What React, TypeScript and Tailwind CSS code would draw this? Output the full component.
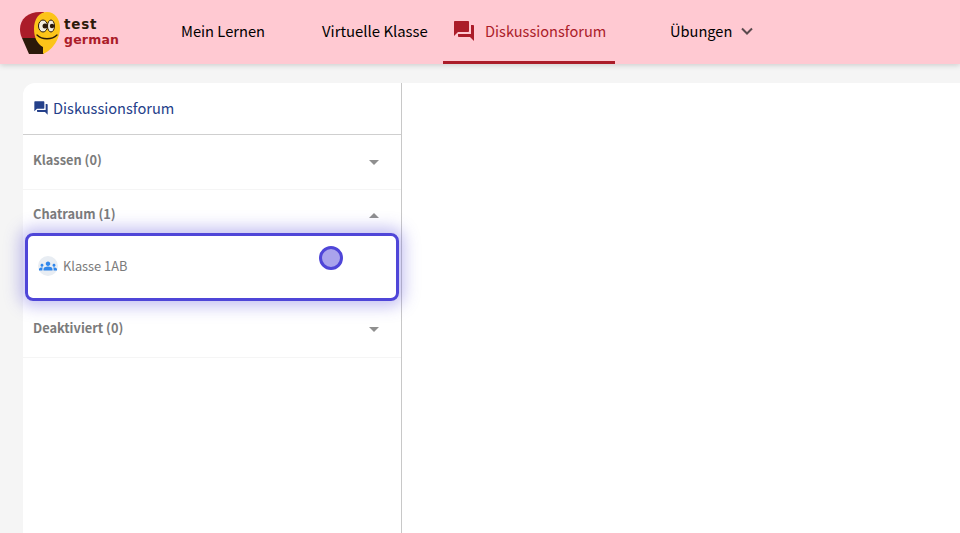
import React from "react";

const F = "font-['Noto_Sans_CJK_SC','Noto_Sans',sans-serif]";

function Chat({ className }: { className: string }) {
  return (
    <svg viewBox="0 0 24 24" className={className} fill="currentColor">
      <path d="M21 6h-2v9H6v2c0 .55.45 1 1 1h11l4 4V7c0-.55-.45-1-1-1zm-4 6V3c0-.55-.45-1-1-1H3c-.55 0-1 .45-1 1v14l4-4h10c.55 0 1-.45 1-1z" />
    </svg>
  );
}

function Logo() {
  return (
    <div className="flex items-center gap-[4px]">
      <svg width="40" height="44" viewBox="0 0 40 44">
        <g transform="translate(0 1)">
          <path d="M20 1C8 1 0 8 0 18c0 3 .5 6 2 9h22V1z" fill="#ab1c29" />
          <path d="M2 27h22v16H9z" fill="#2b1a0a" />
          <path d="M27 1C19 1 14 8 14 18c0 8 3 15 9 18v7c7-3 12-9 14.500-15C39 25 40 21 40 17 40 8 35 1 27 1z" fill="#fcc419" />
          <ellipse cx="23" cy="15" rx="4.500" ry="6" fill="#f5f0e0" stroke="#2b1a0a" strokeWidth="1" />
          <ellipse cx="31" cy="15" rx="3.500" ry="6" fill="#f5f0e0" stroke="#2b1a0a" strokeWidth="1" />
          <circle cx="25" cy="15" r="2.500" fill="#2b1a0a" />
          <circle cx="32" cy="15" r="2.200" fill="#2b1a0a" />
          <path d="M17 24c5 5 15 5 20 0" fill="none" stroke="#2b1a0a" strokeWidth="1.300" strokeLinecap="round" />
        </g>
      </svg>
      <div className="flex flex-col font-['DejaVu_Sans',sans-serif] font-bold text-[12.5px] leading-[15px] tracking-[0.2px]">
        <span className="text-[13.5px] tracking-[0.8px] text-[#2b1a0a]">test</span>
        <span className="text-[#ab1c29]">german</span>
      </div>
    </div>
  );
}

function Caret({ up }: { up?: boolean }) {
  return (
    <svg width="12" height="6" viewBox="0 0 12 6" className="text-[#8f8f8f]" fill="currentColor">
      <path d={up ? "M1 6l5-5 5 5z" : "M1 0l5 5 5-5z"} />
    </svg>
  );
}

function Section({ title, up, h, tm, cm }: { title: string; up?: boolean; h: string; tm: string; cm: string }) {
  return (
    <div className={`flex items-start justify-between pl-[10px] pr-[21px] border-b border-[#f5f5f5] ${h}`}>
      <span className={`text-[12.8px] leading-[18px] font-bold text-[#7b7b7b] ${tm}`}>{title}</span>
      <span className={`flex ${cm}`}><Caret up={up} /></span>
    </div>
  );
}

export default function App() {
  return (
    <div className={`${F} relative h-[533px] w-[960px] overflow-hidden bg-[#f5f5f5]`}>
      <header className="flex h-[64px] items-stretch bg-[#ffc9d2] shadow-[0_1px_6px_rgba(0,0,0,0.18)] pl-[20px]">
        <div className="flex items-center w-[161px]"><Logo /></div>
        <nav className="flex items-stretch text-[14.6px] leading-[20px] text-black">
          <a className="flex items-center w-[141px] pb-[2px] text-[14.7px]">Mein Lernen</a>
          <a className="flex items-center w-[121px] pb-[2px] text-[14.9px]">Virtuelle Klasse</a>
          <a className="flex items-center w-[172px] pl-[9px] gap-[9px] text-[#ab1c29] border-b-[3px] border-[#ab1c29]">
            <Chat className="h-[24px] w-[24px]" />
            Diskussionsforum
          </a>
          <a className="flex items-center ml-[55px] gap-[8px] pb-[2px]">
            Übungen
            <svg width="14" height="14" viewBox="0 0 14 14" fill="none" stroke="#5a4a4e" strokeWidth="2"><path d="M2 4.500l5 5 5-5" /></svg>
          </a>
        </nav>
      </header>

      <main className="flex pl-[23px] pt-[19px]">
        <aside className="h-[450px] w-[379px] shrink-0 rounded-tl-[12px] bg-white border-r border-[#c8c8c8]">
          <div className="flex h-[52px] items-center gap-[4px] border-b border-[#cfcfcf] pl-[10px] pb-[1px] text-[14.6px] leading-[20px] text-[#24408a]">
            <Chat className="h-[16px] w-[16px]" />
            Diskussionsforum
          </div>
          <Section title="Klassen (0)" h="h-[55px]" tm="mt-[16px]" cm="mt-[25px]" />
          <Section title="Chatraum (1)" up h="h-[54px] border-b-0" tm="mt-[15px]" cm="mt-[22px]" />
          <div className="flex h-[58px] items-start gap-[5px] pl-[15px] pt-[12px] text-[12.8px] leading-[20px] text-[#7b7b7b]">
            <span className="flex h-[20px] w-[20px] items-center justify-center rounded-full bg-[#e8edf3]">
              <svg viewBox="0 0 24 24" className="h-[18px] w-[18px]" fill="#2f86eb">
                <path d="M12 12.750c1.630 0 3.070.390 4.240.900 1.080.480 1.760 1.560 1.760 2.730V18H6v-1.610c0-1.180.680-2.260 1.760-2.730 1.170-.520 2.610-.910 4.240-.910zM4 13c1.100 0 2-.900 2-2s-.900-2-2-2-2 .900-2 2 .900 2 2 2zm1.130 1.100C4.760 14.040 4.390 14 4 14c-.990 0-1.930.210-2.780.580C.480 14.900 0 15.620 0 16.430V18h4.500v-1.610c0-.830.230-1.610.630-2.290zM20 13c1.100 0 2-.900 2-2s-.900-2-2-2-2 .900-2 2 .900 2 2 2zm4 3.430c0-.810-.480-1.530-1.220-1.850C21.930 14.210 20.990 14 20 14c-.390 0-.760.040-1.130.100.400.680.630 1.460.630 2.290V18H24v-1.570zM12 6c1.660 0 3 1.340 3 3s-1.340 3-3 3-3-1.340-3-3 1.340-3 3-3z" />
              </svg>
            </span>
            Klasse 1AB
          </div>
          <Section title="Deaktiviert (0)" h="h-[56px]" tm="mt-[17px]" cm="mt-[25px]" />
        </aside>
        <section className="h-[450px] flex-1 bg-white" />
      </main>

      <div className="absolute left-[25px] top-[233px] h-[68px] w-[374px] rounded-[8px] border-[3px] border-[#4f46d8] shadow-[0_0_16px_5px_rgba(79,70,216,0.35)]" />
      <div className="absolute left-[319px] top-[246px] h-[24px] w-[24px] rounded-full border-[3px] border-[#4f46d8] bg-[#a9a3ec]" />
    </div>
  );
}
